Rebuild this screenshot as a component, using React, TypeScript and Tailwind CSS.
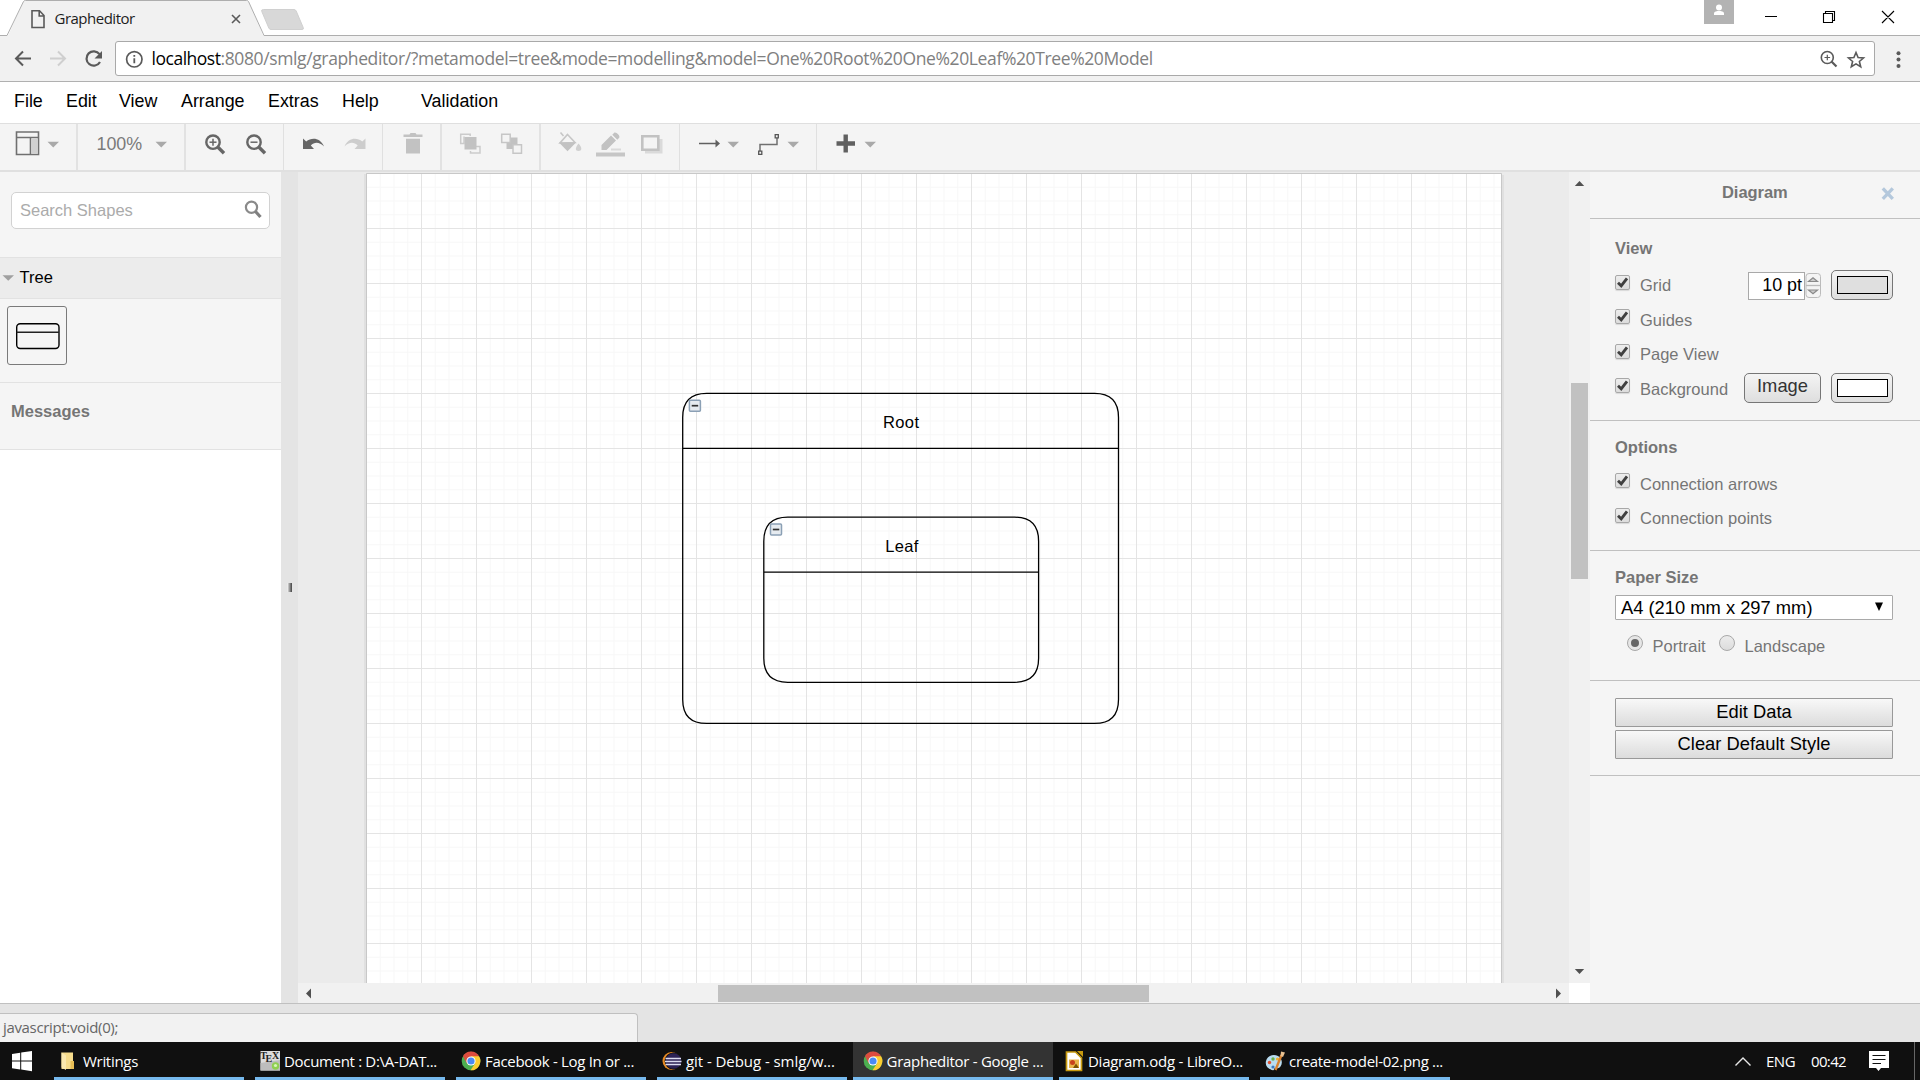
import type { ReactNode } from "react";

const SANS = "font-['Liberation_Sans',Arial,sans-serif]";
const UI = "font-['Open_Sans','Noto_Sans',sans-serif]";

/* Inline drawing whose viewBox uses window coordinates, so neighbouring icons share one system. */
function Pic({ x, y, w, h, className = "", children }: { x: number; y: number; w: number; h: number; className?: string; children: ReactNode }) {
  return (
    <svg width={w} height={h} viewBox={`${x} ${y} ${w} ${h}`} fill="none" className={`block shrink-0 ${className}`}>
      {children}
    </svg>
  );
}

function TitleBar() {
  return (
    <div className="flex h-9 shrink-0 justify-between bg-white">
      <div className="relative h-9 w-full">
        <Pic x={0} y={0} w={1620} h={36} className="absolute inset-0">
          <path d="M0 35.5H7c1 0 1.500-.8 2-2L23 2c.6-1.200 1-1.500 2-1.500H247c1 0 1.500.5 2 1.500L262 33c.5 1.500 1 2.500 2.500 2.500V36H0z" fill="#f1f1f1" />
          <path d="M0 35.500H7L23.500 1.500Q24 .5 25.500 .5H246.500Q248 .5 248.500 1.500L264 35.500H1620" stroke="#aeaeae" />
          <path d="M263.500 9.500H294Q295.500 9.500 296.200 11L303.200 27.500Q304 29.500 302 29.500H271Q269.500 29.500 268.800 28L261.800 11.500Q261 9.500 263.500 9.500Z" fill="#d8d8d8" stroke="#d0d0d0" />
          <path d="M32 10.800H39.500L44 15.500V27.500H32zM39.200 11V16H44" stroke="#5a5a5a" strokeWidth="1.600" />
          <path d="M232 15l8 8M240 15l-8 8" stroke="#5a5a5a" strokeWidth="1.600" />
        </Pic>
        <div className={`relative pt-2 pl-[54.5px] text-[15px] leading-5 tracking-[-0.5px] text-[#1d1d1d] ${UI}`}>Grapheditor</div>
      </div>
      <Pic x={1620} y={0} w={300} h={36}>
        <path d="M1620 35.500H1920" stroke="#aeaeae" />
        <path d="M1704 0h30v24h-30z" fill="#b3b3b3" />
        <circle cx="1719" cy="7.500" r="3" fill="#fff" />
        <path d="M1714 15v-1.500c0-2 3-2.500 5-2.500s5 .5 5 2.500V15z" fill="#fff" />
        <path d="M1765 16.500h12M1823.500 13.500h9v9h-9zM1825.500 13v-1.500h9v9H1833M1882 11l12 12M1894 11l-12 12" stroke="#000" strokeWidth="1.100" />
      </Pic>
    </div>
  );
}

function AddressBar() {
  return (
    <div className="flex h-[46px] shrink-0 items-start border-b border-[#b0b0b0] bg-[#f1f1f1] pt-[5px]">
      <Pic x={0} y={41} w={115} h={35}>
        <path d="M31 58.500H16M23 51.500l-7 7 7 7" stroke="#5a5a5a" strokeWidth="2" />
        <path d="M50 58.500H65M58 51.500l7 7-7 7" stroke="#cfcfcf" strokeWidth="2" />
        <path d="M99.500 54.200A7.200 7.200 0 1 0 100 62" stroke="#5a5a5a" strokeWidth="2.200" />
        <path d="M102 51v7.500h-7.500z" fill="#5a5a5a" />
      </Pic>
      <div className="flex h-[35px] w-[1760px] items-center rounded-[3px] border border-[#a9a9a9] bg-white">
        <Pic x={116} y={42} w={35.5} h={33}>
          <circle cx="134.300" cy="59.300" r="7.700" stroke="#5a5a5a" strokeWidth="1.700" />
          <path d="M134.300 58.200v5M134.300 54.900v1.900" stroke="#5a5a5a" strokeWidth="1.800" />
        </Pic>
        <div className={`flex-1 whitespace-nowrap text-[17.5px] leading-[33px] text-[#808080] ${UI} tracking-[-0.38px]`}>
          <span className="tracking-[-0.48px] text-black">localhost</span>:8080/smlg/grapheditor/?metamodel=tree&amp;mode=modelling&amp;model=One%20Root%20One%20Leaf%20Tree%20Model
        </div>
        <Pic x={1814} y={42} w={60} h={33}>
          <circle cx="1827.300" cy="57.500" r="6" stroke="#5a5a5a" strokeWidth="1.600" />
          <path d="M1824.500 57.500h5.600M1827.300 54.700v5.600" stroke="#5a5a5a" strokeWidth="1.200" />
          <path d="M1831.500 61.500l5 5" stroke="#5a5a5a" strokeWidth="2.200" />
          <path d="M1856 52.500l2.100 5.100 5.400.4-4.100 3.500 1.300 5.300-4.700-2.900-4.700 2.900 1.300-5.300-4.100-3.500 5.400-.4z" stroke="#5a5a5a" strokeWidth="1.600" />
        </Pic>
      </div>
      <Pic x={1875} y={41} w={45} h={35}>
        <circle cx="1898.500" cy="53.300" r="2" fill="#5a5a5a" />
        <circle cx="1898.500" cy="59.600" r="2" fill="#5a5a5a" />
        <circle cx="1898.500" cy="65.900" r="2" fill="#5a5a5a" />
      </Pic>
    </div>
  );
}

function MenuBar() {
  const menu: [string, string][] = [
    ["File", "w-[52px]"],
    ["Edit", "w-[53px]"],
    ["View", "w-[62px]"],
    ["Arrange", "w-[87px]"],
    ["Extras", "w-[74px]"],
    ["Help", "w-[79px]"],
    ["Validation", "w-[100px]"],
  ];
  return (
    <div className={`flex h-[41px] shrink-0 bg-white pl-3.5 text-[17.875px] leading-[38px] text-black ${SANS}`}>
      {menu.map(([label, w]) => (
        <div key={label} className={w}>{label}</div>
      ))}
    </div>
  );
}

const Caret = ({ x }: { x: number }) => <path d={`M${x} 141.800h11.500l-5.750 5.700z`} fill="#a9a9a9" />;

function Group({ x, w, thick, last, children }: { x: number; w: number; thick?: boolean; last?: boolean; children: ReactNode }) {
  return (
    <div className={`h-[46px] shrink-0 ${last ? "" : thick ? "border-r-2 border-[#e2e2e2]" : "border-r border-[#e0e0e0]"}`}>
      <Pic x={x} y={124} w={thick ? w - 2 : w - 1} h={46}>{children}</Pic>
    </div>
  );
}

function Toolbar() {
  return (
    <div className="flex h-[49px] shrink-0 border-t border-b-2 border-t-[#dfdfdf] border-b-[#e0e0e0] bg-[#f4f4f4]">
      <Group x={0} w={78} thick>
        <path d="M16.500 132h22v22.500h-22zM16.500 137.500h22M30.500 137.500v17" stroke="#707070" strokeWidth="1.600" />
        <path d="M31.300 138.500h6.500v15.300h-6.500z" fill="#d0d0d0" />
        <Caret x={47.500} />
      </Group>
      <Group x={78} w={108} thick>
        <text x="96.500" y="150" fontSize="17.875" fill="#7a7a7a" fontFamily="Liberation Sans">100%</text>
        <Caret x={155.500} />
      </Group>
      <Group x={186} w={98}>
        {[0, 41].map((dx) => (
          <g key={dx} transform={`translate(${dx} 0)`} stroke="#666">
            <circle cx="213" cy="142.200" r="6.700" strokeWidth="2.400" />
            <path d="M209.500 142.200h7" strokeWidth="1.500" />
            {dx === 0 && <path d="M213 138.700v7" strokeWidth="1.500" />}
            <path d="M218 147.200l6 6" strokeWidth="3.400" />
          </g>
        ))}
      </Group>
      <Group x={284} w={99}>
        <path d="M303 149v-10.500l3.200 3.100c5.500-4.500 14-4 17.800 4.900-4.500-4.600-9.500-4.800-13.200-1l3.200 3.500z" fill="#666" />
        <path d="M365.500 149v-10.500l-3.200 3.100c-5.500-4.500-14-4-17.800 4.900 4.500-4.600 9.500-4.800 13.200-1l-3.200 3.500z" fill="#cdcdcd" />
      </Group>
      <Group x={383} w={59} thick>
        <path d="M403.500 134.500h6l1-1.500h5l1 1.500h6v2.500h-19zM406 138.800h14v14.700h-14z" fill="#c2c2c2" />
      </Group>
      <Group x={442} w={99} thick>
        <path d="M464 136.500v7h-3.300v-9.300h9.500v1.800M476 146.500h4v6.500h-9.500v-2" stroke="#cbcbcb" strokeWidth="1.500" />
        <path d="M464.500 137h12v12.500h-12z" fill="#c2c2c2" />
        <path d="M506.500 137.500h11v11.500h-11z" fill="#c2c2c2" />
        <path d="M501.700 134.200h8.500v8.300h-8.500zM513 144.700h8.500v8.500h-8.500z" stroke="#c6c6c6" strokeWidth="1.500" fill="#f4f4f4" />
      </Group>
      <Group x={541} w={139}>
        <path d="M560.500 132.500l3 3.500M567.500 134.500l7.500 8-15 .5z" stroke="#c6c6c6" strokeWidth="1.600" />
        <path d="M559 142.500h17l-8.500 8.700z" fill="#c2c2c2" />
        <path d="M578.500 143.500c4 4.500 3.500 7.500 0 7.500s-3.500-3 0-7.500z" fill="#d0d0d0" />
        <path d="M601.500 150v-5l9.500-9.500 5 5-9.500 9.500zM612.300 134.700l1.900-1.900c1.500-1.500 6.500 3 5 5l-1.900 1.900z" fill="#c2c2c2" />
        <path d="M611 149.500h10" stroke="#dadada" strokeWidth="2" />
        <path d="M596 152.500h29v4h-29z" fill="#c6c6c6" />
        <path d="M645 139h17.500v14.500H645z" fill="#dadada" />
        <path d="M642.300 136.300h16v13.500h-16z" fill="#f4f4f4" stroke="#c2c2c2" strokeWidth="2.600" />
      </Group>
      <Group x={680} w={137}>
        <path d="M699 143.500h17" stroke="#606060" strokeWidth="1.500" />
        <path d="M715.500 139.500l4.500 4-4.500 4z" fill="#606060" />
        <Caret x={727.500} />
        <path d="M760 151v-6.500h17V138" stroke="#707070" strokeWidth="1.500" />
        <path d="M758.700 151.200h3.100v3.100h-3.100zM775.200 134.700h3.100v3.100h-3.100z" stroke="#555" strokeWidth="1.300" />
        <Caret x={787.500} />
      </Group>
      <Group x={817} w={100} last>
        <path d="M836.500 143.500h18.500M845.700 134.500v18" stroke="#606060" strokeWidth="4.400" />
        <Caret x={864.500} />
      </Group>
    </div>
  );
}

function Sidebar() {
  return (
    <div className={`flex w-[281px] shrink-0 flex-col bg-white ${SANS}`}>
      <div className="h-[85px] bg-[#f5f5f5] px-[11px] pt-5">
        <div className="flex h-[37px] items-center justify-between rounded-[5px] border border-[#d2d2d2] bg-white pl-2 text-[16.5px] text-[#ababab]">
          Search Shapes
          <Pic x={243} y={196} w={26} h={30}>
            <circle cx="251.500" cy="207.300" r="5.600" stroke="#8a8a8a" strokeWidth="2.200" />
            <path d="M255.500 211.500l5 5.500" stroke="#808080" strokeWidth="3.200" />
          </Pic>
        </div>
      </div>
      <div className="flex h-[42px] items-center border-y border-[#e2e2e2] bg-[#ececec] text-[16.5px] text-black">
        <Pic x={0} y={258} w={19.5} h={40}>
          <path d="M2.500 275.200h11.500l-5.750 5.600z" fill="#a0a0a0" />
        </Pic>
        <span className="-mt-0.5">Tree</span>
      </div>
      <div className="h-[83px] bg-[#f5f5f5] pt-[7px] pl-[7px]">
        <div className="h-[59px] w-[60px] rounded-[3px] border border-[#7a7a7a]">
          <Pic x={8} y={307} w={58} h={57}>
            <rect x="16.700" y="323.700" width="42.300" height="24.800" rx="3.500" stroke="#000" strokeWidth="1.400" />
            <path d="M16.700 332.200H59" stroke="#222" strokeWidth="1.400" />
          </Pic>
        </div>
      </div>
      <div className="h-[68px] border-y border-[#e2e2e2] bg-[#f5f5f5] pl-[11px] text-[16.5px] leading-[57px] font-bold text-[#757575]">Messages</div>
    </div>
  );
}

function Fold({ x, y }: { x: number; y: number }) {
  return (
    <g>
      <rect x={x + 0.7} y={y + 0.7} width="11" height="11" rx="1" fill="#e6ebf0" stroke="#8ba0b5" strokeWidth="1.500" />
      <path d={`M${x + 3} ${y + 6.2}h6.500`} stroke="#333" strokeWidth="1.700" />
    </g>
  );
}

const container = (l: number, t: number, r: number, b: number) => {
  const c = 24;
  return `M${l} ${t + c}Q${l} ${t} ${l + c} ${t}H${r - c}Q${r} ${t} ${r} ${t + c}V${b - c}Q${r} ${b} ${r - c} ${b}H${l + c}Q${l} ${b} ${l} ${b - c}ZM${l} ${t + 55}H${r}`;
};

function Canvas() {
  return (
    <div className="flex w-[1292px] shrink-0 flex-col">
      <div className="flex h-[811px]">
        <Pic x={298} y={172} w={1271} h={811} className="bg-[#ebebeb]">
          <defs>
            <pattern id="minor" x="366" y="173" width="55" height="55" patternUnits="userSpaceOnUse">
              <path d="M14.250 0V55M28 0V55M41.750 0V55M0 14.250H55M0 28H55M0 41.750H55" stroke="#f7f7f7" />
              <path d="M.5 0V55M0 .5H55" stroke="#e4e4e4" />
            </pattern>
          </defs>
          <path d="M364 174H367V983H364zM1502 175h2V983h-2z" fill="#e0e0e0" />
          <path d="M366 173H1502V983H366z" fill="#fff" />
          <path d="M366 173H1502V983H366z" fill="url(#minor)" />
          <path d="M366.500 984V173.500H1501.500V984" stroke="#c8c8c8" />
          <path d={container(682.7, 393.4, 1118.5, 723.4)} stroke="#000" strokeWidth="1.300" />
          <path d={container(763.8, 517.2, 1038.6, 682.3)} stroke="#000" strokeWidth="1.300" />
          <Fold x={688.7} y={399.5} />
          <Fold x={769.8} y={523.3} />
          <g fontFamily="Liberation Sans" fontSize="16.500" fill="#000" textAnchor="middle" letterSpacing=".4">
            <text x="901.200" y="428">Root</text>
            <text x="902" y="552">Leaf</text>
          </g>
        </Pic>
        <div className="flex w-[21px] flex-col bg-[#f1f1f1]">
          <Pic x={1569} y={172} w={21} h={211}>
            <path d="M1574.800 186h9.400l-4.700-5z" fill="#505050" />
          </Pic>
          <div className="ml-0.5 h-[196px] w-[17px] bg-[#c1c1c1]" />
          <Pic x={1569} y={579} w={21} h={404}>
            <path d="M1574.800 969h9.400l-4.700 5z" fill="#505050" />
          </Pic>
        </div>
      </div>
      <div className="flex h-5 w-[1271px] items-center bg-[#f1f1f1]">
        <Pic x={298} y={983} w={420} h={20}>
          <path d="M311 988.500v10l-5-5z" fill="#505050" />
        </Pic>
        <div className="h-[17px] w-[431px] bg-[#c1c1c1]" />
        <Pic x={1149} y={983} w={420} h={20}>
          <path d="M1556 988.500v10l5-5z" fill="#505050" />
        </Pic>
      </div>
    </div>
  );
}

function Tick() {
  return (
    <div className="mb-[7px] h-[15px] w-[15px] shrink-0 rounded-[2px] border border-[#a8a8a8] bg-linear-to-b from-[#ededed] to-[#dcdcdc] shadow-[0_1px_1px_rgba(0,0,0,0.12)]">
      <svg viewBox="0 0 13 13" className="block h-[13px] w-[13px]" fill="none">
        <path d="M2 6.800l3.200 3L11 2.300" stroke="#404040" strokeWidth="2.900" />
      </svg>
    </div>
  );
}

function Check({ label, children }: { label: string; children?: ReactNode }) {
  return (
    <div className="flex h-[34.500px] items-center">
      <Tick />
      <span className="ml-2.5 flex-1 whitespace-nowrap">{label}</span>
      {children}
    </div>
  );
}

function ColorButton({ fill }: { fill: string }) {
  return (
    <div className="mb-0.5 ml-2.5 flex h-[30px] w-[62px] items-center justify-center rounded-[5px] border border-[#767676] bg-linear-to-b from-[#f4f4f4] to-[#dedede]">
      <div className={`h-[18px] w-[51px] border border-black ${fill}`} />
    </div>
  );
}

const Heading = ({ children }: { children: string }) => <div className="font-bold text-[#757575]">{children}</div>;

function FormatPanel() {
  return (
    <div className={`flex w-[330px] shrink-0 flex-col bg-[#f5f5f5] text-[16.5px] text-[#757575] ${SANS}`}>
      <div className="flex h-[47px] items-start justify-end border-b border-[#c0c0c0]">
        <div className="w-[197px] pl-[39px] leading-[41px] font-bold tracking-[-0.05px]">Diagram</div>
        <Pic x={1880} y={172} w={40} h={40}>
          <path d="M1882.800 188.300l10 10.500M1892.800 188.300l-10 10.500" stroke="#b4c8dc" strokeWidth="3.300" />
        </Pic>
      </div>
      <div className="h-[202px] border-b border-[#c0c0c0] pr-[27px] pl-[25px]">
        <div className="h-[49.500px] leading-[59px]"><Heading>View</Heading></div>
        <Check label="Grid">
          <div className="flex h-7 w-[57px] items-center justify-end border border-[#a9a9a9] bg-white pr-0.5 text-[17.9px] text-black">10 pt</div>
          <Pic x={1805} y={272} w={16} h={28}>
            <rect x="1806" y="273.500" width="14.500" height="24" rx="3" fill="#f4f4f4" stroke="#bbb" />
            <path d="M1806 285.500h14.500" stroke="#bbb" strokeWidth="1.300" />
            <path d="M1808.500 281.500h9l-4.500-3.800zM1808.500 290h9l-4.500 3.800z" fill="#ccc" stroke="#8a8a8a" strokeWidth="1.200" />
          </Pic>
          <ColorButton fill="bg-[#dfdfdf]" />
        </Check>
        <Check label="Guides" />
        <Check label="Page View" />
        <Check label="Background">
          <div className="mb-[3px] flex h-[30px] w-[77px] items-center justify-center rounded-[5px] border border-[#767676] bg-linear-to-b from-[#f4f4f4] to-[#dedede] pb-1 text-[18.33px] text-[#333]">Image</div>
          <div className="mb-px"><ColorButton fill="bg-white" /></div>
        </Check>
      </div>
      <div className="h-[130px] border-b border-[#c0c0c0] pl-[25px]">
        <div className="h-[46px] leading-[52px]"><Heading>Options</Heading></div>
        <Check label="Connection arrows" />
        <Check label="Connection points" />
      </div>
      <div className="h-[130px] border-b border-[#c0c0c0] pr-[27px] pl-[25px]">
        <div className="h-11 leading-[53px]"><Heading>Paper Size</Heading></div>
        <div className="flex h-[25px] items-center justify-between rounded-[1px] border border-[#a9a9a9] bg-white pl-[5px] text-[18.33px] whitespace-nowrap text-black">
          A4 (210 mm x 297 mm)
          <Pic x={1872} y={598} w={20} h={20}>
            <path d="M1875 602.500h8l-4 8.500z" fill="#000" />
          </Pic>
        </div>
        <div className="flex h-[52px] items-center pl-3">
          <div className="mb-1.5 flex h-4 w-4 items-center justify-center rounded-full border border-[#a8a8a8] bg-[#e6e6e6]">
            <div className="h-2 w-2 rounded-full bg-[#666]" />
          </div>
          <span className="ml-[9.5px] w-[66.500px]">Portrait</span>
          <div className="mb-1.5 h-4 w-4 rounded-full border border-[#a8a8a8] bg-linear-to-b from-[#ececec] to-[#dcdcdc]" />
          <span className="ml-[9.5px]">Landscape</span>
        </div>
      </div>
      <div className="flex h-[95px] flex-col gap-[3px] border-b border-[#c0c0c0] pt-[17px] pr-[27px] pl-[25px] text-center text-[18.33px] leading-[26px] text-black">
        <div className="h-[29px] rounded-[1px] border border-[#999] bg-linear-to-b from-[#f8f8f8] to-[#dcdcdc]">Edit Data</div>
        <div className="h-[29px] rounded-[1px] border border-[#999] bg-linear-to-b from-[#f8f8f8] to-[#dcdcdc]">Clear Default Style</div>
      </div>
    </div>
  );
}

const Chrome = ({ x }: { x: number }) => (
  <g transform={`translate(${x} 1061)`}>
    <circle r="9.300" fill="#4caf50" />
    <path d="M0 0L-8.100-4.700A9.300 9.300 0 0 1 8.100-4.700z" fill="#dd4b3e" />
    <path d="M0-4.700H8.100A9.300 9.300 0 0 1-.5 9.300L4.200 2.300z" fill="#fccd30" />
    <path d="M-8.100-4.700L-4.200 2.300 0 0z" fill="#dd4b3e" />
    <circle r="4.600" fill="#fff" />
    <circle r="3.600" fill="#4a8af4" />
  </g>
);

const tasks: { label: string; x: number; gap: string; pad: string; ls: string; active?: boolean; icon: ReactNode }[] = [
  {
    label: "Writings", x: 54, gap: "w-[201px]", pad: "w-[190px]", ls: "tracking-[-0.3px]",
    icon: (
      <>
        <path d="M61.500 1052.500H73V1069H61.500z" fill="#f6dc8c" />
        <path d="M61.500 1052.500l4.500 3v14.500l-4.500-2.500z" fill="#fbe9b0" />
        <path d="M70.500 1061h3.500v8h-3.500z" fill="#e8bd55" />
      </>
    ),
  },
  {
    label: "Document : D:\\A-DAT...", x: 255, gap: "w-[201px]", pad: "w-[190px]", ls: "tracking-[-0.32px]",
    icon: (
      <>
        <path d="M260.500 1051h19.500v19.500h-19.500z" fill="#dcdcdc" />
        <path d="M260.500 1063l19.500-3v10.500h-19.500z" fill="#bdbdbd" />
        <g fontFamily="Liberation Serif" fontSize="10" fontWeight="700" fill="#222">
          <text x="260.300" y="1058.500">T</text>
          <text x="265.500" y="1061.500">E</text>
          <text x="272" y="1058.500">X</text>
        </g>
        <circle cx="275.500" cy="1066" r="3.700" fill="#8fd04f" />
        <circle cx="275.500" cy="1065.500" r="1.600" fill="#d8f5b8" />
      </>
    ),
  },
  { label: "Facebook - Log In or ...", x: 456, gap: "w-[201px]", pad: "w-[190px]", ls: "tracking-[-0.31px]", icon: <Chrome x={471} /> },
  {
    label: "git - Debug - smlg/w...", x: 657, gap: "w-[196px]", pad: "w-[190px]", ls: "tracking-[-0.06px]",
    icon: (
      <>
        <circle cx="671.500" cy="1061" r="9" fill="#e88a23" />
        <circle cx="673.200" cy="1061" r="8.600" fill="#111" />
        <circle cx="673.500" cy="1061" r="7.800" fill="#2c2255" />
        <path d="M665.500 1058.500h15.500M665 1061.500h16.500M665.500 1064.500h15.500" stroke="#dcdcf0" strokeWidth="1.500" />
      </>
    ),
  },
  { label: "Grapheditor - Google ...", x: 853, gap: "w-[201px]", pad: "w-[200px]", ls: "tracking-[-0.27px]", active: true, icon: <Chrome x={873} /> },
  {
    label: "Diagram.odg - LibreO...", x: 1059, gap: "w-[201px]", pad: "w-[190px]", ls: "tracking-[-0.27px]",
    icon: (
      <>
        <path d="M1066.500 1052h9l6 6v12.500h-15z" fill="#fff" stroke="#c79a10" strokeWidth="1.700" />
        <path d="M1077 1051h6v6z" fill="#c79a10" />
        <path d="M1069 1059.500h10v8.500h-10z" fill="#e9b64a" />
        <circle cx="1072.500" cy="1062.500" r="2.500" fill="#c8421c" />
        <path d="M1073 1068l3-4.500 3 4.500z" fill="#7a5200" />
      </>
    ),
  },
  {
    label: "create-model-02.png ...", x: 1260, gap: "w-[201px]", pad: "w-[190px]", ls: "tracking-[-0.31px]",
    icon: (
      <>
        <path d="M1266 1061c1-5 7-7.500 12-5 4 2 5 7 2.500 10.500-2 3-4 1-5.500 1.500s0 3-3 2c-5-1.500-7-5-6-9z" fill="#b9dcf0" />
        <circle cx="1269.500" cy="1062.500" r="1.700" fill="#e05030" />
        <circle cx="1273" cy="1059" r="1.700" fill="#6ab04a" />
        <circle cx="1277.500" cy="1059" r="1.600" fill="#f0b030" />
        <circle cx="1273" cy="1067" r="1.600" fill="#3b78c0" />
        <path d="M1275.500 1070l6-15" stroke="#d98230" strokeWidth="2.400" />
        <path d="M1280.500 1056l.5-4.500 4 1-2 4.500z" fill="#e8c090" />
      </>
    ),
  },
];

function Taskbar() {
  return (
    <div className={`flex h-[38px] shrink-0 bg-[#101010] text-[15px] text-white ${UI}`}>
      <Pic x={0} y={1042} w={54} h={38}>
        <path d="M12 1054l8.200-1.200v7.800H12zM21.200 1052.600l10.800-1.600v9.600h-10.800zM12 1061.600h8.200v7.800L12 1068.200zM21.200 1061.600h10.800v9.600l-10.800-1.600z" fill="#fff" />
      </Pic>
      {tasks.map((t) => (
        <div key={t.label} className={t.active ? "w-[206px] shrink-0" : `${t.gap} shrink-0`}>
          <div className={`flex h-[38px] items-start border-b-[3px] border-[#76b9ed] ${t.pad} ${t.active ? "bg-[#333]" : ""}`}>
            <Pic x={t.x} y={1042} w={t.active ? 33.5 : 29} h={35}>{t.icon}</Pic>
            <span className={`leading-[38px] whitespace-nowrap ${t.ls}`}>{t.label}</span>
          </div>
        </div>
      ))}
      <div className="flex flex-1 items-start justify-end leading-[38px]">
        <Pic x={1730} y={1042} w={36} h={38}>
          <path d="M1735.500 1065.500l7.500-7.500 7.500 7.500" stroke="#e8e8e8" strokeWidth="1.400" />
        </Pic>
        <span className="w-[45px] tracking-[-0.5px]">ENG</span>
        <span className="w-[49px] tracking-[-0.65px]">00:42</span>
        <Pic x={1860} y={1042} w={60} h={38}>
          <path d="M1869 1051h20v17h-8l-2.500 3-2.500-3h-7z" fill="#fff" />
          <path d="M1872.500 1055.500h13M1872.500 1059.500h13M1872.500 1063.500h8.500" stroke="#101010" strokeWidth="1.200" />
          <path d="M1914.500 1042v38" stroke="#666" />
        </Pic>
      </div>
    </div>
  );
}

export default function App() {
  return (
    <div className="flex h-[1080px] w-[1920px] flex-col overflow-hidden bg-white">
      <TitleBar />
      <AddressBar />
      <MenuBar />
      <Toolbar />
      <div className="flex h-[831px] shrink-0">
        <Sidebar />
        <div className="flex w-[17px] shrink-0 items-center justify-center bg-[#e4e4e4]">
          <div className="h-[9px] w-[5px] bg-linear-to-r from-white via-[#999] to-[#444]" />
        </div>
        <Canvas />
        <FormatPanel />
      </div>
      <div className="flex h-[39px] shrink-0 items-end border-t border-[#c0c0c0] bg-[#e4e4e4]">
        <div className={`h-[29px] w-[638px] rounded-tr-[4px] border-t border-r border-[#c0c0c0] bg-[#f2f2f2] pl-[3px] text-[15px] leading-[26px] tracking-[-0.34px] text-[#666] ${UI}`}>javascript:void(0);</div>
      </div>
      <Taskbar />
    </div>
  );
}
